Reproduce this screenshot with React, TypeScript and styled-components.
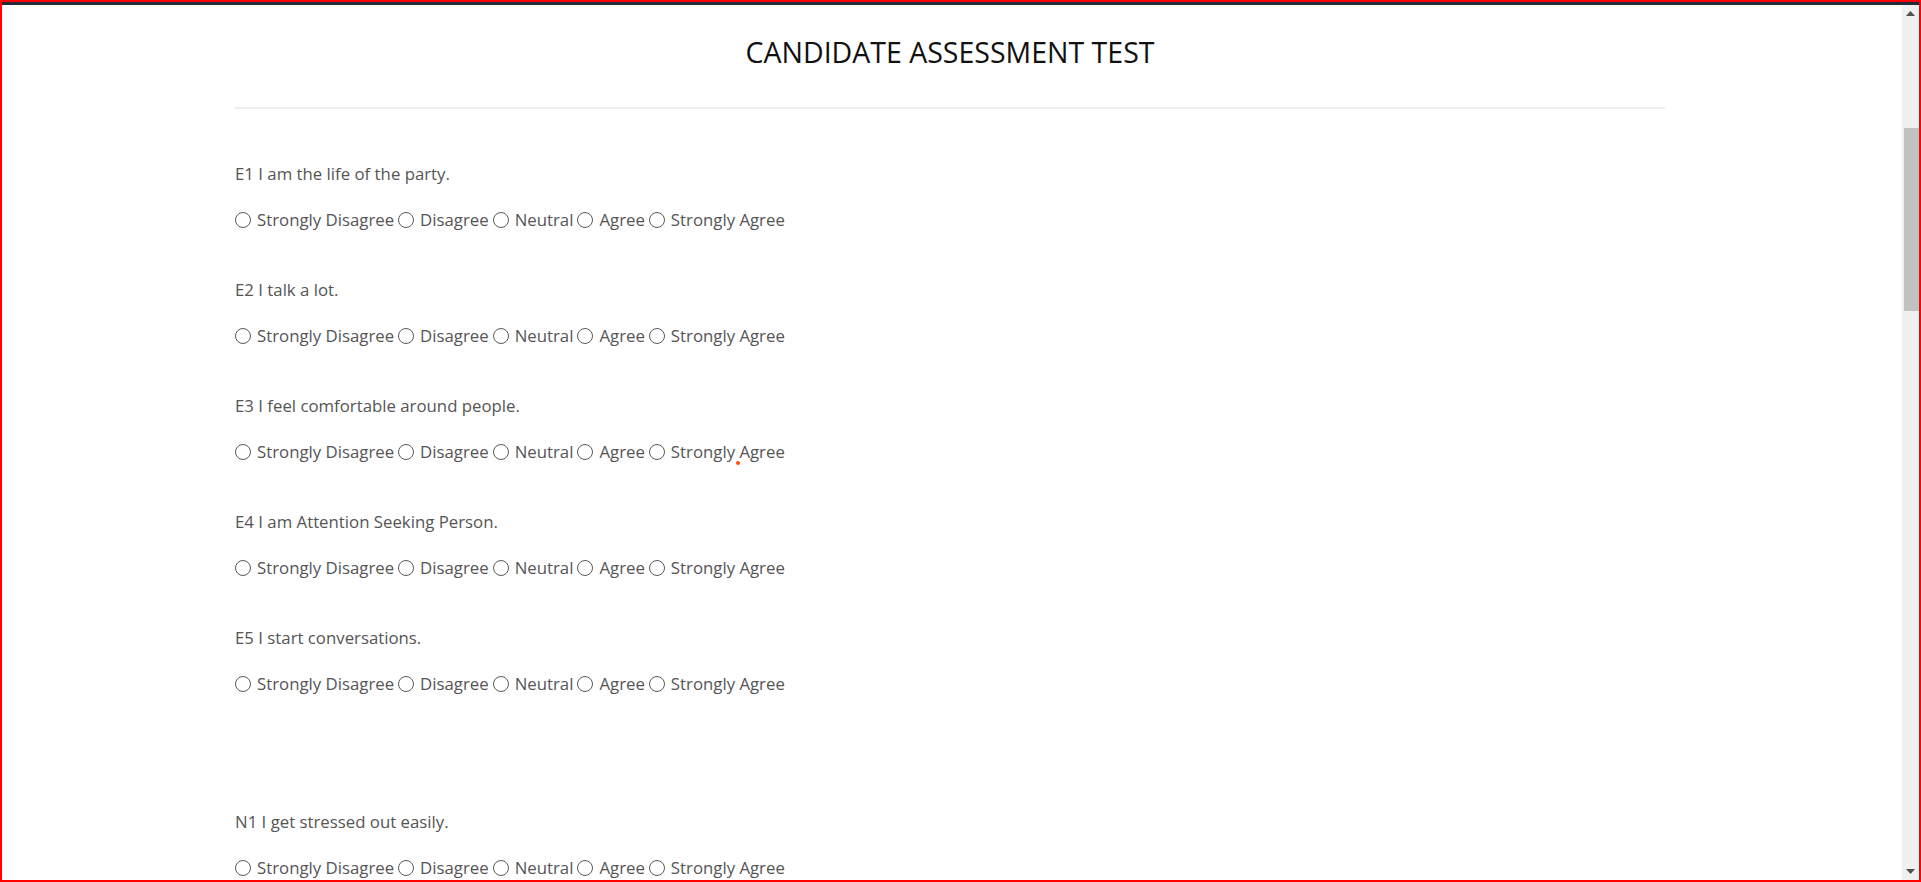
import React from "react";
import styled, { createGlobalStyle } from "styled-components";

const GlobalStyle = createGlobalStyle`
  html, body {
    margin: 0;
    padding: 0;
    height: 100%;
    overflow: hidden;
    background: #ffffff;
  }
  body {
    font-family: "Open Sans", "Noto Sans", "Liberation Sans", sans-serif;
  }
  #root {
    height: 100%;
  }
`;

const Frame = styled.div`
  box-sizing: border-box;
  width: 100%;
  height: 100vh;
  border: 2px solid #ff0000;
  display: flex;
  flex-direction: column;
  background: #ffffff;
`;

const TopBar = styled.div`
  height: 3px;
  flex: 0 0 3px;
  background: #232a3a;
`;

const Main = styled.div`
  flex: 1;
  min-height: 0;
  display: flex;
`;

const Viewport = styled.div`
  position: relative;
  flex: 1;
  min-width: 0;
  overflow: hidden;
  padding-right: 4px;
`;

const Container = styled.div`
  width: 1430px;
  margin: 0 auto;
`;

const Title = styled.h1`
  margin: 29px 0 0;
  font-size: 28.5px;
  line-height: 36px;
  font-weight: 400;
  text-align: center;
  color: #111111;
`;

const Divider = styled.hr`
  margin: 37px 0 0;
  border: 0;
  height: 2px;
  background: #efefef;
`;

const Questions = styled.div`
  padding-top: 55px;
  display: flex;
  flex-direction: column;
`;

const Question = styled.div<{ $extraTop?: number }>`
  margin-top: ${(p) => p.$extraTop ?? 0}px;
  margin-bottom: 50px;
`;

const Prompt = styled.p`
  margin: 0 0 26px;
  font-size: 16.8px;
  line-height: 20px;
  color: #555555;
`;

const Options = styled.div`
  display: flex;
  align-items: center;
  font-size: 16.8px;
  line-height: 20px;
  color: #555555;
`;

const Option = styled.label`
  display: inline-flex;
  align-items: center;
  margin-right: 4px;
  white-space: nowrap;
`;

const Radio = styled.input`
  appearance: none;
  -webkit-appearance: none;
  box-sizing: border-box;
  width: 16px;
  height: 16px;
  margin: 0 6px 0 0;
  border: 1px solid #5a5a5a;
  border-radius: 50%;
  background: #ffffff;
  &:checked {
    background: radial-gradient(circle, #333 0 3px, #fff 3.5px);
  }
`;

const Dot = styled.span`
  position: absolute;
  left: 734px;
  top: 456px;
  width: 4px;
  height: 4px;
  border-radius: 50%;
  background: #ff4a10;
`;

const Scrollbar = styled.div`
  width: 17px;
  flex: 0 0 17px;
  background: #f0f0f0;
  display: flex;
  flex-direction: column;
`;

const ArrowButton = styled.div`
  height: 17px;
  flex: 0 0 17px;
  display: flex;
  align-items: center;
  justify-content: center;
`;

const Track = styled.div`
  flex: 1;
`;

const Thumb = styled.div`
  margin: 106px 0 0 2px;
  height: 183px;
  background: #c1c1c1;
`;

const Arrow = ({ dir }: { dir: "up" | "down" }) => (
  <svg width="9" height="5" viewBox="0 0 9 5">
    {dir === "up" ? (
      <polygon points="0,5 4.5,0 9,5" fill="#505050" />
    ) : (
      <polygon points="0,0 9,0 4.5,5" fill="#505050" />
    )}
  </svg>
);

const CHOICES = ["Strongly Disagree", "Disagree", "Neutral", "Agree", "Strongly Agree"];

const QUESTIONS: { id: string; text: string; extraTop?: number }[] = [
  { id: "E1", text: "I am the life of the party." },
  { id: "E2", text: "I talk a lot." },
  { id: "E3", text: "I feel comfortable around people." },
  { id: "E4", text: "I am Attention Seeking Person." },
  { id: "E5", text: "I start conversations." },
  { id: "N1", text: "I get stressed out easily.", extraTop: 68 },
];

export default function App() {
  return (
    <>
      <GlobalStyle />
      <Frame>
        <TopBar />
        <Main>
          <Viewport>
            <Container>
              <Title>CANDIDATE ASSESSMENT TEST</Title>
              <Divider />
              <Questions>
                {QUESTIONS.map((q) => (
                  <Question key={q.id} $extraTop={q.extraTop}>
                    <Prompt>
                      {q.id} {q.text}
                    </Prompt>
                    <Options>
                      {CHOICES.map((c) => (
                        <Option key={c}>
                          <Radio type="radio" name={q.id} value={c} />
                          {c}
                        </Option>
                      ))}
                    </Options>
                  </Question>
                ))}
              </Questions>
            </Container>
            <Dot />
          </Viewport>
          <Scrollbar>
            <ArrowButton>
              <Arrow dir="up" />
            </ArrowButton>
            <Track>
              <Thumb />
            </Track>
            <ArrowButton>
              <Arrow dir="down" />
            </ArrowButton>
          </Scrollbar>
        </Main>
      </Frame>
    </>
  );
}
